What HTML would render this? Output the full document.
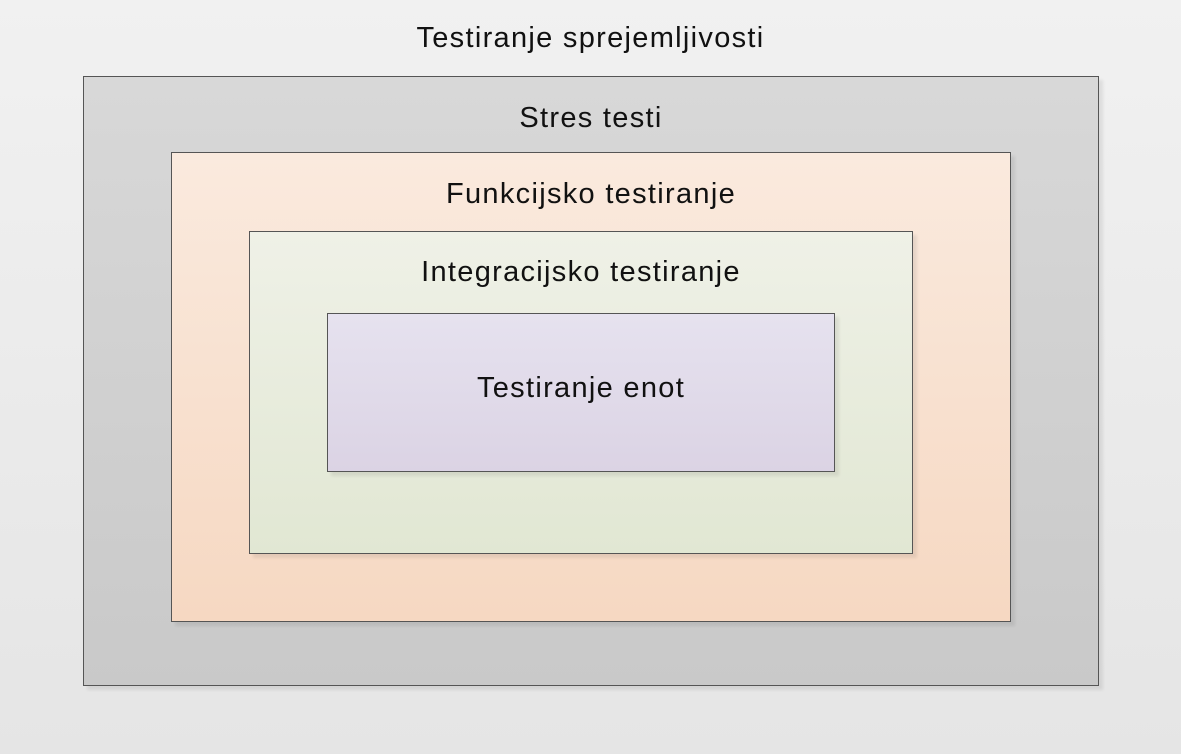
<!DOCTYPE html>
<html><head><style>
html,body{margin:0;padding:0}
body{width:1181px;height:754px;position:relative;overflow:hidden;background:linear-gradient(#f1f1f1,#e5e5e5);font-family:"Liberation Sans",sans-serif;color:#111}
.b{position:absolute;box-sizing:border-box;border:1px solid #555;box-shadow:4px 4px 3px rgba(0,0,0,0.08)}
.t{position:absolute;left:0;right:0;text-align:center;font-size:29px;line-height:34px;white-space:nowrap;letter-spacing:1.3px}
</style></head><body>
<div class="t" style="top:21px">Testiranje sprejemljivosti</div>
<div class="b" style="left:83px;top:76px;width:1016px;height:610px;background:linear-gradient(#d8d8d8,#c9c9c9)"></div>
<div class="t" style="left:83px;width:1016px;top:101px">Stres testi</div>
<div class="b" style="left:171px;top:152px;width:840px;height:470px;background:linear-gradient(#faeade,#f6d8c2)"></div>
<div class="t" style="left:171px;width:840px;top:177px">Funkcijsko testiranje</div>
<div class="b" style="left:249px;top:231px;width:664px;height:323px;background:linear-gradient(#eff1e7,#e1e7d3)"></div>
<div class="t" style="left:249px;width:664px;top:255px">Integracijsko testiranje</div>
<div class="b" style="left:327px;top:313px;width:508px;height:159px;background:linear-gradient(#e6e2ef,#dbd3e4)"></div>
<div class="t" style="left:327px;width:508px;top:371px">Testiranje enot</div>
</body></html>
